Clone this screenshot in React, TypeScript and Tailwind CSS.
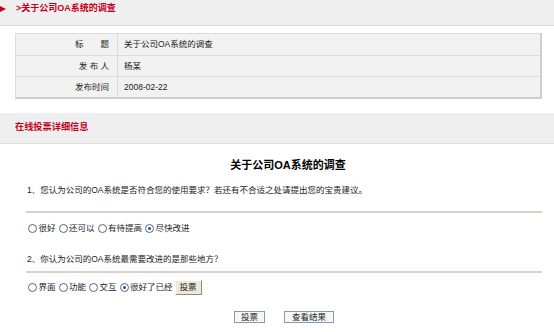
import { useState } from "react";

const font = "font-['Liberation_Sans','Noto_Sans_CJK_SC',sans-serif]";

function Radio({ label, checked, onClick }: { label: string; checked?: boolean; onClick?: () => void }) {
    return (
        <label className="flex items-center gap-[1.5px] cursor-pointer" onClick={onClick}>
            <span className="w-[9px] h-[9px] rounded-full border border-[#4f6a86] bg-white flex items-center justify-center">
                {checked && <span className="w-[3px] h-[3px] rounded-full bg-[#2f4f8f]" />}
            </span>
            <span>{label}</span>
        </label>
    );
}

function RadioGroup({ options, initial, extra }: { options: string[]; initial: number; extra?: React.ReactNode }) {
    const [sel, setSel] = useState(initial);
    return (
        <div className="flex items-center gap-[3px] h-[16px] pl-[2px]">
            {options.map((o, i) => (
                <Radio key={o} label={o} checked={sel === i} onClick={() => setSel(i)} />
            ))}
            {extra}
        </div>
    );
}

const rows = [
    { label: "标　　题", value: "关于公司OA系统的调查" },
    { label: "发 布 人", value: "杨某" },
    { label: "发布时间", value: "2008-02-22" },
];

export default function App() {
    return (
        <div className={`w-[554px] h-[332px] bg-white overflow-hidden text-[8.5px] text-[#222] ${font}`}>
            {/* page header */}
            <div className="h-[26px] bg-[#efefef] border-b border-[#dcdcdc] flex items-start pt-[3px]">
                <span className="mt-[2.5px] w-0 h-0 border-y-[3.5px] border-y-transparent border-l-[6px] border-l-[#c4001a]" />
                <span className="ml-[10px] text-[9px] font-bold text-[#c4001a] leading-[11px]">&gt;关于公司OA系统的调查</span>
            </div>

            {/* info table */}
            <div className="mt-[7px] ml-[15px] w-[527px] border border-[#dedede] border-r-2 border-b-2 border-r-[#cfcfcf] border-b-[#cfcfcf] bg-[#f2f2f2]">
                {rows.map((r, i) => (
                    <div key={r.label} className={`flex h-[21px] ${i > 0 ? "border-t border-[#dcdcdc]" : ""}`}>
                        <div className="w-[102px] flex items-center justify-end pr-[8px] border-r border-[#dcdcdc]">{r.label}</div>
                        <div className="flex-1 flex items-center pl-[6px]">{r.value}</div>
                    </div>
                ))}
            </div>

            {/* vote section header */}
            <div className="mt-[14px] h-[31px] bg-[#efefef] border-b border-[#dcdcdc] flex items-center pl-[15px]">
                <span className="text-[9.2px] font-bold text-[#c4001a]">在线投票详细信息</span>
            </div>

            <div className="pl-[26px] pr-[12px]">
                <div className="mt-[11px] h-[20px] flex items-center justify-center text-[11px] font-bold text-black pl-[8px]">
                    关于公司OA系统的调查
                </div>

                <div className="mt-[7px] h-[16px] flex items-center pl-[1px]">
                    1、您认为公司的OA系统是否符合您的使用要求？若还有不合适之处请提出您的宝贵建议。
                </div>
                <div className="mt-[13px] border-t-2 border-[#d6d3cc]" />
                <div className="mt-[7px]">
                    <RadioGroup options={["很好", "还可以", "有待提高", "尽快改进"]} initial={3} />
                </div>

                <div className="mt-[15px] h-[16px] flex items-center pl-[1px]">
                    2、你认为公司的OA系统最需要改进的是那些地方？
                </div>
                <div className="mt-[4px] border-t-2 border-[#d6d3cc]" />
                <div className="mt-[6px]">
                    <RadioGroup
                        options={["界面", "功能", "交互", "很好了已经"]}
                        initial={3}
                        extra={
                            <button className="ml-[-1px] h-[15px] px-[4px] bg-[#ece9d8] border border-[#8a8a8a] border-t-white border-l-white text-[8.5px] leading-none">
                                投票
                            </button>
                        }
                    />
                </div>

                <div className="mt-[16px] flex justify-center gap-[19px]">
                    <button className="w-[31px] h-[12px] border border-[#7f9db9] bg-[#f7f7f5] text-[8.5px] leading-none flex items-center justify-center">
                        投票
                    </button>
                    <button className="w-[50px] h-[12px] border border-[#7f9db9] bg-[#f7f7f5] text-[8.5px] leading-none flex items-center justify-center">
                        查看结果
                    </button>
                </div>
            </div>
        </div>
    );
}
